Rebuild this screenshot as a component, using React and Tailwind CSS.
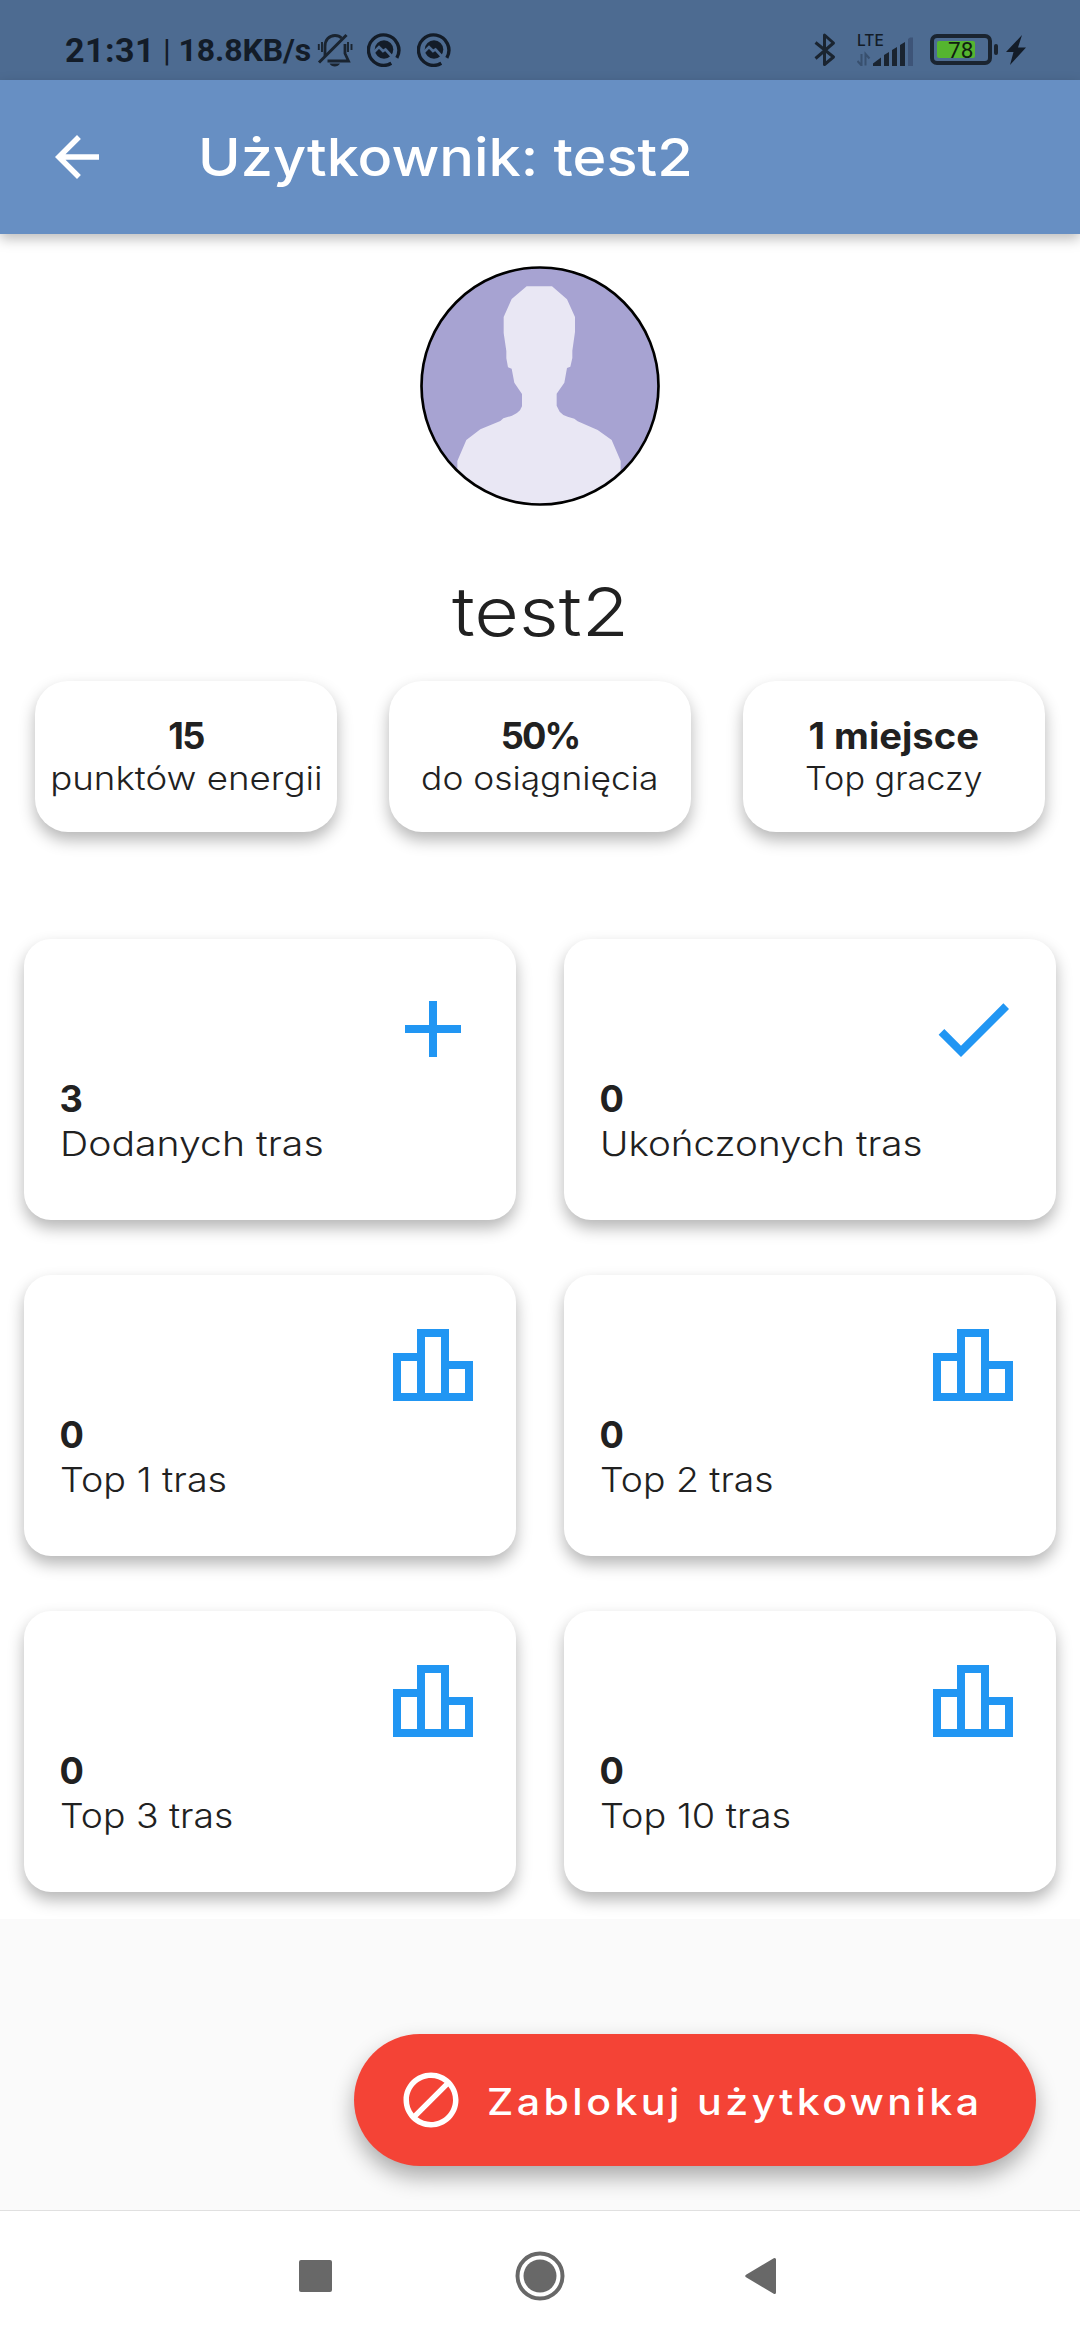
import React from 'react';

const STATS = [
  { value: '15', label: 'punktów energii', valueFit: 'tracking-[-1.59px]', labelFit: 'scale-x-[1.122]' },
  { value: '50%', label: 'do osiągnięcia', valueFit: 'tracking-[-2px]', labelFit: 'scale-x-[1.081]' },
  { value: '1 miejsce', label: 'Top graczy', valueFit: 'scale-x-[1.056]', labelFit: 'scale-x-[1.047]' },
];

const ICONS = {
  add: 'M19 13h-6v6h-2v-6H5v-2h6V5h2v6h6v2z',
  check: 'M9 16.17 4.83 12l-1.42 1.41L9 19 21 7l-1.41-1.41z',
  podium: 'M16 11V3H8v6H2v12h20V11h-6zm-6-6h4v14h-4V5zm-6 6h4v8H4v-8zm16 8h-4v-6h4v6z',
};

const ROUTES = [
  { icon: 'add', value: '3', label: 'Dodanych tras', fit: 'scale-x-[1.14]' },
  { icon: 'check', value: '0', label: 'Ukończonych tras', fit: 'scale-x-[1.123]' },
  { icon: 'podium', value: '0', label: 'Top 1 tras', fit: 'scale-x-[1.096]' },
  { icon: 'podium', value: '0', label: 'Top 2 tras', fit: 'scale-x-[1.085]' },
  { icon: 'podium', value: '0', label: 'Top 3 tras', fit: 'scale-x-[1.085]' },
  { icon: 'podium', value: '0', label: 'Top 10 tras', fit: 'scale-x-[1.1]' },
];

function BellOff() {
  return (
    <svg className="ml-[8px] h-[34px] w-[36px]" viewBox="0 0 36 34" fill="none" stroke="#1a2430" strokeWidth="2.8">
      <path d="M8 23V13.500C8 7 12 2.500 18 2.500c3 0 5 .9 6.500 2.500M28 11v9.500l3.500 7.500H10.500" />
      <path d="M2 29.500 29.500 2" strokeWidth="3" />
      <path d="M12.500 30.500h10.500c-1 2-3 3-5.200 3s-4.300-1-5.300-3z" fill="#1a2430" stroke="none" />
      <path d="M1.800 11v6M5 9v10M31 9v10M34.500 11v6" strokeWidth="1.900" />
    </svg>
  );
}

function RouteBadge() {
  return (
    <svg className="h-[34px] w-[34px]" viewBox="0 0 34 34" fill="none">
      <path d="M24.300 30.300A15.200 15.200 0 1 1 29.800 24.800" stroke="#131c28" strokeWidth="3.400" />
      <circle cx="17" cy="16.500" r="9.300" fill="#131c28" />
      <path d="M5.500 20.500 12 14l4 4 2.500-1.500L30 29" stroke="#4d6b91" strokeWidth="2.600" />
    </svg>
  );
}

function StatusBar() {
  return (
    <div className="flex h-[80px] items-center bg-[#4d6b91] pt-[19px] pl-[65px] font-[Roboto,sans-serif] font-bold text-[#131c28]">
      <span className="w-[98px] text-[34px] leading-[40px] tracking-[0.5px] whitespace-nowrap">21:31</span>
      <span className="w-[146px] text-[32px] leading-[40px] tracking-[-0.1px] whitespace-nowrap">
        <span className="font-normal">|</span> 18.8KB/s
      </span>
      <BellOff />
      <div className="ml-[14px] flex gap-[16px]">
        <RouteBadge />
        <RouteBadge />
      </div>
      <svg className="ml-[362px] h-[34px] w-[24px]" viewBox="0 0 24 34" fill="none" stroke="#1a2430" strokeWidth="3" strokeLinejoin="round">
        <path d="M2.500 9.500 20.500 24 11.500 31.500V2L20.500 10 2.500 25.500" />
      </svg>
      <div className="ml-[20px] flex h-[32px] w-[58px] flex-col justify-between">
        <span className="h-[14px] font-[Inter,sans-serif] text-[15.500px] leading-[14px] font-medium">LTE</span>
        <svg className="-mt-[12px] h-[30px] w-[58px] shrink-0" viewBox="0 0 58 30">
          <path d="M4.500 18v11.500L0.500 25M8.500 29.500V18l4 4.500" fill="none" stroke="#38506f" strokeWidth="2" />
          <path d="M16 30v-2.500l8-6V30zM27 30V19l5-3v14zM35 30V14l5-3v19zM43 30V9l5-3v24z" fill="#1a2430" />
          <path d="M51 30V3l2-1.500h3V30z" fill="#3d5478" />
        </svg>
      </div>
      <div className="ml-[15px] flex h-[31px] w-[62px] items-center rounded-[7px] border-4 border-[#1a2430] pl-[3px]">
        <div className="flex h-[17px] w-[38px] items-center rounded-[2px] bg-[#55b52f] pl-[11px]">
          <span className="text-[22.500px] leading-[18px] font-normal text-[#10200f]">78</span>
        </div>
      </div>
      <div className="ml-[2px] h-[11px] w-[4px] rounded-[2px] bg-[#1a2430]" />
      <svg className="ml-[8px] h-[30px] w-[20px]" viewBox="0 0 20 30" fill="#131c28">
        <path d="M16 0 0 17h7.500L4 30 20 12.500h-8z" />
      </svg>
    </div>
  );
}

function AppBar() {
  return (
    <header className="relative flex h-[154px] items-center bg-[#678fc3] pl-[44px] text-white shadow-[0_5px_12px_rgba(0,0,0,0.26)]">
      <svg className="h-[66px] w-[66px]" viewBox="0 0 24 24" fill="currentColor">
        <path d="M20 11H7.830l5.590-5.590L12 4l-8 8 8 8 1.410-1.410L7.830 13H20v-2z" />
      </svg>
      <h1 className="ml-[88px] origin-left scale-x-[1.092] text-[52.8px] leading-[70px] font-medium whitespace-nowrap">Użytkownik: test2</h1>
    </header>
  );
}

function Avatar() {
  return (
    <svg className="mt-[32px] h-[240px] w-[240px]" viewBox="0 0 720 720">
      <defs>
        <clipPath id="avatar-circle">
          <circle cx="360" cy="360" r="357" />
        </clipPath>
      </defs>
      <circle cx="360" cy="360" r="357" fill="#a7a3d2" />
      <path
        clipPath="url(#avatar-circle)"
        fill="#e9e7f4"
        d="M320 61h76l45 39 24 53v45l-8 56v22l-6 26-10 4-8 44-23 33v36l9 18q10 12 24 15l20 6 10 8 60 26 42 30 27 63v160H112V585l27-63 42-32 60-25 9-8 26-8q16-6 24-16l6-12v-37l-23-34-8-42-11-4-5-27v-22l-8-54v-48l24-54z"
      />
      <circle cx="360" cy="360" r="355.500" fill="none" stroke="#000" strokeWidth="8" />
    </svg>
  );
}

function StatCard({ value, label, valueFit, labelFit }) {
  return (
    <div className="flex h-[151px] flex-col items-center rounded-[33px] bg-white pt-[34px] whitespace-nowrap shadow-[0_8px_16px_rgba(0,0,0,0.29)]">
      <span className={`text-[36.2px] leading-[42px] font-bold ${valueFit}`}>{value}</span>
      <span className={`text-[32.7px] leading-[42px] font-light ${labelFit}`}>{label}</span>
    </div>
  );
}

function RouteCard({ icon, value, label, fit }) {
  return (
    <div className="flex h-[281px] flex-col items-start rounded-[27px] bg-white pt-[42px] pr-[35px] pl-[35.5px] whitespace-nowrap shadow-[0_8px_16px_rgba(0,0,0,0.29)]">
      <svg className="h-[96px] w-[96px] self-end" viewBox="0 0 24 24" fill="#2196f3">
        <path d={ICONS[icon]} />
      </svg>
      <span className="text-[36.2px] leading-[44px] font-bold">{value}</span>
      <span className={`origin-left text-[34.4px] leading-[45px] font-light ${fit}`}>{label}</span>
    </div>
  );
}

function BlockButton() {
  return (
    <button className="mt-[115px] mr-[44px] flex h-[132px] w-[682px] items-center self-end rounded-full bg-[#f44336] pl-[44px] text-white shadow-[0_11px_22px_rgba(0,0,0,0.32)]">
      <svg className="h-[66px] w-[66px]" viewBox="0 0 24 24" fill="currentColor">
        <path d="M12 2C6.500 2 2 6.500 2 12s4.500 10 10 10 10-4.500 10-10S17.500 2 12 2zM4 12c0-4.400 3.600-8 8-8 1.800 0 3.500.6 4.900 1.700L5.700 16.900C4.600 15.500 4 13.800 4 12zm8 8c-1.800 0-3.500-.6-4.900-1.700L18.300 7.100C19.400 8.500 20 10.200 20 12c0 4.400-3.600 8-8 8z" />
      </svg>
      <span className="mt-[3px] ml-[23px] origin-left scale-x-[1.108] text-[37.1px] leading-[50px] font-medium tracking-[3.1px] whitespace-nowrap">Zablokuj użytkownika</span>
    </button>
  );
}

function NavBar() {
  return (
    <nav className="flex h-[130px] items-center border-t border-[#e0e0e0] bg-white pl-[299px]">
      <div className="h-[32px] w-[33px] rounded-[2px] bg-[#686868]" />
      <svg className="ml-[183px] h-[50px] w-[50px]" viewBox="0 0 50 50" fill="#686868">
        <circle cx="25" cy="25" r="22.500" fill="none" stroke="#686868" strokeWidth="4" />
        <circle cx="25" cy="25" r="16.500" />
      </svg>
      <svg className="ml-[180px] h-[38px] w-[32px]" viewBox="0 0 32 38" fill="#686868" stroke="#686868" strokeWidth="3" strokeLinejoin="round">
        <path d="M1.800 19 29.500 2.500v33z" />
      </svg>
    </nav>
  );
}

export default function App() {
  return (
    <div className="flex h-[2340px] w-[1080px] flex-col overflow-hidden bg-[#fafafa] font-[Inter,sans-serif] text-[#212121]">
      <StatusBar />
      <AppBar />
      <main className="flex h-[1685px] flex-col items-center bg-white">
        <Avatar />
        <h2 className="mt-[66px] scale-x-[1.143] text-[67.4px] leading-[80px] font-light">test2</h2>
        <section className="mt-[29px] grid w-full grid-cols-3 gap-[52px] px-[35px]">
          {STATS.map((s) => (
            <StatCard key={s.label} {...s} />
          ))}
        </section>
        <section className="mt-[107px] grid w-full grid-cols-2 gap-x-[48px] gap-y-[55px] px-[24px]">
          {ROUTES.map((r) => (
            <RouteCard key={r.label} {...r} />
          ))}
        </section>
      </main>
      <div className="flex h-[291px] flex-col">
        <BlockButton />
      </div>
      <NavBar />
    </div>
  );
}
